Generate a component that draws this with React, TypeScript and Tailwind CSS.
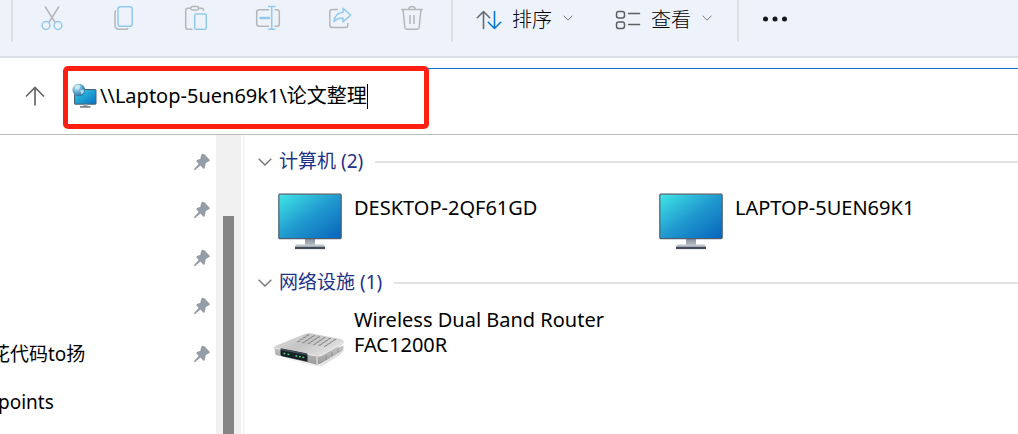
import React, { useState } from "react";

type IconProps = { className?: string };

const GREY = "#b4b7ba";
const SKY = "#93c9f0";

function CutIcon() {
  return (
    <svg width="24" height="26" viewBox="0 0 24 26" fill="none" strokeWidth="1.5" aria-hidden="true">
      <path d="M5 1.5 15.5 18M19 1.5 8.5 18" stroke={GREY} />
      <circle cx="6" cy="20.5" r="3.9" stroke={SKY} />
      <circle cx="18" cy="20.5" r="3.9" stroke={SKY} />
    </svg>
  );
}

function CopyIcon() {
  return (
    <svg width="24" height="26" viewBox="0 0 24 26" fill="none" strokeWidth="1.5" aria-hidden="true">
      <path d="M4 5.5c-.7.5-1 1.200-1 2V20c0 2.600 1.600 4.300 4.200 4.300h6.600c1.200 0 2-.4 2.500-1" stroke={GREY} />
      <rect x="6" y="1.700" width="14.200" height="19.600" rx="2.400" stroke={SKY} />
    </svg>
  );
}

function PasteIcon() {
  return (
    <svg width="24" height="26" viewBox="0 0 24 26" fill="none" strokeWidth="1.5" aria-hidden="true">
      <path d="M7 3.200H3.700c-1.200 0-2 .8-2 2v17.100c0 1.200.8 2 2 2H8.500M14.500 3.200h3c1.200 0 2 .8 2 2V6" stroke={GREY} />
      <rect x="6.700" y="1.500" width="8" height="3.400" rx="1.700" stroke={GREY} />
      <rect x="10.700" y="9" width="11.600" height="15.300" rx="1.600" stroke={SKY} />
    </svg>
  );
}

function RenameIcon() {
  return (
    <svg width="26" height="26" viewBox="0 0 26 26" fill="none" strokeWidth="1.5" aria-hidden="true">
      <path d="M14 4.700H4.200c-1.500 0-2.500 1-2.500 2.500v11.600c0 1.500 1 2.500 2.500 2.500H14M19.500 4.700h2.300c1.500 0 2.500 1 2.500 2.500v11.600c0 1.500-1 2.500-2.500 2.500h-2.300" stroke={GREY} />
      <path d="M5.500 13h8.500" stroke={SKY} strokeWidth="2.400" strokeLinecap="round" />
      <path d="M16.700 1.500v22.700M13 1.500h7.400M13 24.200h7.400" stroke={SKY} strokeWidth="1.600" />
    </svg>
  );
}

function ShareIcon() {
  return (
    <svg width="24" height="26" viewBox="0 0 24 26" fill="none" strokeWidth="1.5" strokeLinejoin="round" aria-hidden="true">
      <path d="M10 4.500H4.300c-1.500 0-2.500 1-2.500 2.500v13c0 1.500 1 2.500 2.500 2.500h13c1.500 0 2.500-1 2.500-2.500v-2" stroke={GREY} />
      <path d="M15 3.200 22.700 10 15 17v-4c-4-.3-6.800 1-9 3.800.4-5.300 3.400-9.200 9-9.600Z" stroke={SKY} />
    </svg>
  );
}

function DeleteIcon() {
  return (
    <svg width="24" height="26" viewBox="0 0 24 26" fill="none" strokeWidth="1.5" stroke={GREY} aria-hidden="true">
      <path d="M1.200 4.500h21.600M8.800 4.500c0-4 6.400-4 6.400 0M3 4.500l1.900 18c.1 1.100.8 1.800 1.900 1.800h10.400c1.100 0 1.800-.7 1.900-1.800L21 4.500M10 10v9M14 10v9" />
    </svg>
  );
}

function SortIcon() {
  return (
    <svg width="26" height="20" viewBox="0 0 26 20" fill="none" strokeWidth="1.600" strokeLinecap="round" strokeLinejoin="round" aria-hidden="true">
      <path d="M7.500 18.500V1.500M1.300 7.700l6.200-6.200 6.200 6.200" stroke="#686b6f" />
      <path d="M18.500 1.500v17M12.300 12.300l6.200 6.200 6.200-6.200" stroke="#0a78d4" />
    </svg>
  );
}

function ViewIcon() {
  return (
    <svg width="26" height="20" viewBox="0 0 26 20" fill="none" stroke="#5b5e62" strokeWidth="1.500" strokeLinecap="round" aria-hidden="true">
      <rect x="1.500" y="1.500" width="8" height="6.500" rx="2.200" />
      <rect x="1.500" y="12" width="8" height="6.500" rx="2.200" />
      <path d="M13.500 3.500h11M13.500 14.500h11" />
    </svg>
  );
}

function Chevron({ className = "" }: IconProps) {
  return (
    <svg className={className} viewBox="0 0 14 8" fill="none" stroke="currentColor" strokeWidth="1.300" aria-hidden="true">
      <path d="m.7.7 6.300 6.300L13.300.7" />
    </svg>
  );
}

function PinIcon() {
  return (
    <svg width="18" height="18" viewBox="0 0 18 18" fill="#949ea6" aria-hidden="true">
      <path d="M8.300 1.900c.5-.9 1.300-1.300 2.400-.9l1.500.9 4.200 4.500c.7.800.5 1.400-.4 1.900l-3.200 1.800c-.4 1.900-.6 3.800-1.400 5.400l-.8.400-3.200-3.300-5.200 4.400-1.200.1.200-1.300 4.500-4.900-2.500-2.700c.6-1.300 2.200-1.800 4-2.100Z" />
    </svg>
  );
}

function NetworkPcIcon() {
  return (
    <svg width="25" height="26" viewBox="0 0 25 26" aria-hidden="true">
      <defs>
        <linearGradient id="npScreen" x1="0" y1="0" x2="1" y2="1">
          <stop offset="0" stopColor="#35cfe3" />
          <stop offset="1" stopColor="#0a70c2" />
        </linearGradient>
        <radialGradient id="npGlobe" cx=".35" cy=".3" r=".8">
          <stop offset="0" stopColor="#d8f1f9" />
          <stop offset=".5" stopColor="#5ba8cf" />
          <stop offset="1" stopColor="#23679a" />
        </radialGradient>
      </defs>
      <rect x="2.500" y="6.500" width="21.500" height="14.700" rx=".6" fill="url(#npScreen)" stroke="#47606f" />
      <path d="M11 21.500h4.500v2H11z" fill="#a5adb5" />
      <path d="M8 23.300h10.500v1.300H8z" fill="#545c66" />
      <circle cx="6.800" cy="7" r="6.300" fill="url(#npGlobe)" />
      <path d="M3.500 3.500c2-1.800 4-1.700 5-.7L7.300 5.500l-3 .9ZM8 7.500l3.500-1 .7 2-2.500 3.200Z" fill="#d5edf0" opacity=".75" />
    </svg>
  );
}

function MonitorIcon({ id }: { id: string }) {
  return (
    <svg className="shrink-0" width="64" height="57" viewBox="0 0 64 57" aria-hidden="true">
      <defs>
        <linearGradient id={id} x1="0" y1="0" x2="1" y2="1">
          <stop offset="0" stopColor="#40e6e7" />
          <stop offset=".5" stopColor="#2099cf" />
          <stop offset="1" stopColor="#0764ba" />
        </linearGradient>
        <linearGradient id={id + "Stand"} x1="0" y1="0" x2="0" y2="1">
          <stop offset="0" stopColor="#858d98" />
          <stop offset="1" stopColor="#bcc3ca" />
        </linearGradient>
      </defs>
      <path d="M27 45h10v8H27z" fill={"url(#" + id + "Stand)"} />
      <path d="M18 51.500h28l1 2.500H17z" fill="#bcc3ca" />
      <path d="M17 53.800h30v2.300H17z" fill="#454b57" />
      <rect x=".8" y="1.200" width="62.400" height="44.500" rx="1.200" fill={"url(#" + id + ")"} stroke="#4f5f70" strokeWidth="1.200" />
      <path d="M1 .6h62" stroke="#a0a8ad" strokeWidth=".8" />
    </svg>
  );
}

function RouterIcon() {
  const rows = [0, 1, 2, 3];
  const cols = [0, 1, 2, 3, 4, 5];
  return (
    <svg className="shrink-0" width="72" height="34" viewBox="0 0 72 34" aria-hidden="true">
      <defs>
        <linearGradient id="rtTop" x1="0" y1="0" x2="1" y2=".6">
          <stop offset="0" stopColor="#e2e2e2" />
          <stop offset=".5" stopColor="#c4c4c4" />
          <stop offset="1" stopColor="#e4e4e4" />
        </linearGradient>
        <linearGradient id="rtSide" x1="0" y1="0" x2="0" y2="1">
          <stop offset="0" stopColor="#c8c8c8" />
          <stop offset="1" stopColor="#9a9a9a" />
        </linearGradient>
      </defs>
      <path d="M4 24 45 32.500 71 16 66 22 48 33 43 33Z" fill="#000" opacity=".12" />
      <path d="M.5 14.500 1 20c0 1.500 1 2.200 3 2.600l37 8.700c2 .4 4 .2 6-.8l21-12.500c1.300-.8 1.700-2 1.500-5.500L46 20Z" fill="url(#rtSide)" />
      <path d="M1 15.500c-1-.6-.8-1.600.8-2.300L31 1.300c2-.8 4-.9 6-.6l29.500 5.800c3.200.8 4 3 1.500 4.700L48.500 22.500c-1.700 1-3.500 1.200-5.500.8Z" fill="url(#rtTop)" stroke="#bdbdbd" strokeWidth=".5" />
      <path d="M1.500 15.200c10 1.900 28 5.500 40 7.500 3 .5 5.200.2 7.500-1.200L69 9.500" fill="none" stroke="#ececec" strokeWidth=".9" />
      {rows.map((r) =>
        cols.map((c) => (
          <path
            key={r + "-" + c}
            d={`M${32 - r * 3 + c * 5.4} ${3 + r * 2 + c * 0.9}l3.200-1.300`}
            stroke="#8a8a8a"
            strokeWidth="1.100"
          />
        )),
      )}
      <path d="M7.500 15.500 32 20.200c1 .2 1.500.7 1.500 1.600v7L8.500 23.200c-1.300-.3-2-1-2-2.300v-4.200c0-.8.300-1.200 1-1.200Z" fill="#152129" />
      <path d="M7 15.800 33 20.700v1.500L7 17.200Z" fill="#46525c" />
      <path d="M9.500 20.500h1.800M13.500 21.300h1.800M21.500 23h1.800M25 23.700h1.800M28.500 24.400h1.800" stroke="#55e579" strokeWidth="1.300" />
      <path d="M43 24v7" stroke="#ededed" strokeWidth="1" />
      <path d="M52 22.500v4M58 19v4M64 15.500v4" stroke="#777" strokeWidth=".6" />
    </svg>
  );
}

function Separator() {
  return <div className="h-[42px] w-[2px] shrink-0 bg-[#dde1e6]" />;
}

function ToolButton({ label, children }: { label: string; children: React.ReactNode }) {
  return (
    <button type="button" aria-label={label} className="flex h-9 w-[72px] shrink-0 items-center justify-center">
      {children}
    </button>
  );
}

function MenuButton({ icon, label }: { icon: React.ReactNode; label: string }) {
  return (
    <button type="button" className="flex h-10 shrink-0 items-center text-[20px] font-light leading-6 text-black">
      {icon}
      <span className="ml-[10px]">{label}</span>
      <Chevron className="mb-1 ml-[11px] h-[6px] w-[10px] text-[#6c7074]" />
    </button>
  );
}

function Toolbar() {
  return (
    <header className="flex h-[58px] shrink-0 items-start overflow-hidden border-b-2 border-[#dce0e4] bg-[#eef3fb] pl-[11px]">
      <Separator />
      <div className="ml-[3px] mr-[3px] flex shrink-0">
        <ToolButton label="剪切"><CutIcon /></ToolButton>
        <ToolButton label="复制"><CopyIcon /></ToolButton>
        <ToolButton label="粘贴"><PasteIcon /></ToolButton>
        <ToolButton label="重命名"><RenameIcon /></ToolButton>
        <ToolButton label="共享"><ShareIcon /></ToolButton>
        <ToolButton label="删除"><DeleteIcon /></ToolButton>
      </div>
      <Separator />
      <div className="flex shrink-0 gap-[42px] pl-[23px] pr-[25px]">
        <MenuButton icon={<SortIcon />} label="排序" />
        <MenuButton icon={<ViewIcon />} label="查看" />
      </div>
      <Separator />
      <button type="button" aria-label="更多" className="flex h-[38px] w-[72px] shrink-0 items-center justify-center">
        <svg width="26" height="6" viewBox="0 0 26 6" fill="#161719" aria-hidden="true">
          <circle cx="3.500" cy="3" r="2.500" />
          <circle cx="13" cy="3" r="2.500" />
          <circle cx="22.500" cy="3" r="2.500" />
        </svg>
      </button>
    </header>
  );
}

function AddressBar() {
  const [path, setPath] = useState("\\\\Laptop-5uen69k1\\论文整理");
  return (
    <div className="relative flex h-[77px] shrink-0 border-b border-[#bcbcbc] pt-[10px]">
      <button type="button" aria-label="上移" className="flex h-14 w-16 shrink-0 items-center justify-center pl-[6px]">
        <svg width="20" height="20" viewBox="0 0 20 20" fill="none" stroke="#666" strokeWidth="1.700" aria-hidden="true">
          <path d="M10 19.500V1.500M1 10.500l9-9 9 9" />
        </svg>
      </button>
      <div className="flex h-[55px] flex-1 items-center border-t border-[#0a74cf] pl-2">
        <NetworkPcIcon />
        <input
          aria-label="地址"
          value={path}
          onChange={(e) => setPath(e.target.value)}
          className="ml-[3px] field-sizing-content bg-transparent text-[20px] leading-6 text-black outline-none"
        />
        <span className="h-[25px] w-px bg-black" />
      </div>
      <div className="pointer-events-none absolute left-[63px] top-2 h-[63px] w-[366px] rounded-[5px] border-5 border-[#ff1f12]" />
    </div>
  );
}

function Sidebar() {
  const items = ["", "", "", "", "花代码to扬"];
  return (
    <nav className="w-[216px] shrink-0 overflow-hidden pt-[3px]">
      <ul>
        {items.map((name, i) => (
          <li key={i} className="flex h-12 items-center justify-between pr-[5px]">
            <span className="-ml-[9px] whitespace-nowrap">{name}</span>
            <PinIcon />
          </li>
        ))}
        <li className="-ml-[2px] flex h-12 items-center">points</li>
      </ul>
    </nav>
  );
}

function GroupHeader({ title }: { title: string }) {
  return (
    <h2 className="flex h-7 items-center text-[#1e3287]">
      <Chevron className="h-2 w-[14px] shrink-0 text-[#737373]" />
      <span className="ml-[7px] shrink-0 pb-px">{title}</span>
      <span className="ml-3 h-[2px] flex-1 bg-[#e3e3e3]" />
    </h2>
  );
}

export default function App() {
  return (
    <div className="flex h-screen flex-col overflow-hidden bg-white font-['Noto_Sans','Noto_Sans_CJK_SC',sans-serif] text-[19px] leading-[25px] text-black">
      <Toolbar />
      <AddressBar />
      <div className="flex min-h-0 flex-1">
        <Sidebar />
        <div className="flex w-[25px] shrink-0 justify-center bg-[#f0f0f0] pt-[81px]">
          <div className="w-[11px] bg-[#858585]" />
        </div>
        <div className="ml-[2px] w-[2px] shrink-0 bg-[#f5f5f5]" />
        <main className="min-w-0 flex-1 overflow-hidden pl-[13px] pt-[13px]">
          <section>
            <GroupHeader title="计算机 (2)" />
            <div className="flex flex-wrap pl-5 pt-[17px] text-[20px]">
              <div className="flex w-[381px] gap-3">
                <MonitorIcon id="pcA" />
                <span className="pt-[2px]">DESKTOP-2QF61GD</span>
              </div>
              <div className="flex gap-3">
                <MonitorIcon id="pcB" />
                <span className="pt-[2px]">LAPTOP-5UEN69K1</span>
              </div>
            </div>
          </section>
          <section className="mt-[19px]">
            <GroupHeader title="网络设施 (1)" />
            <div className="flex items-end gap-2 pl-4 pt-[10px] text-[20px]">
              <RouterIcon />
              <span className="w-[260px] pb-[10px]">Wireless Dual Band Router FAC1200R</span>
            </div>
          </section>
        </main>
      </div>
    </div>
  );
}
